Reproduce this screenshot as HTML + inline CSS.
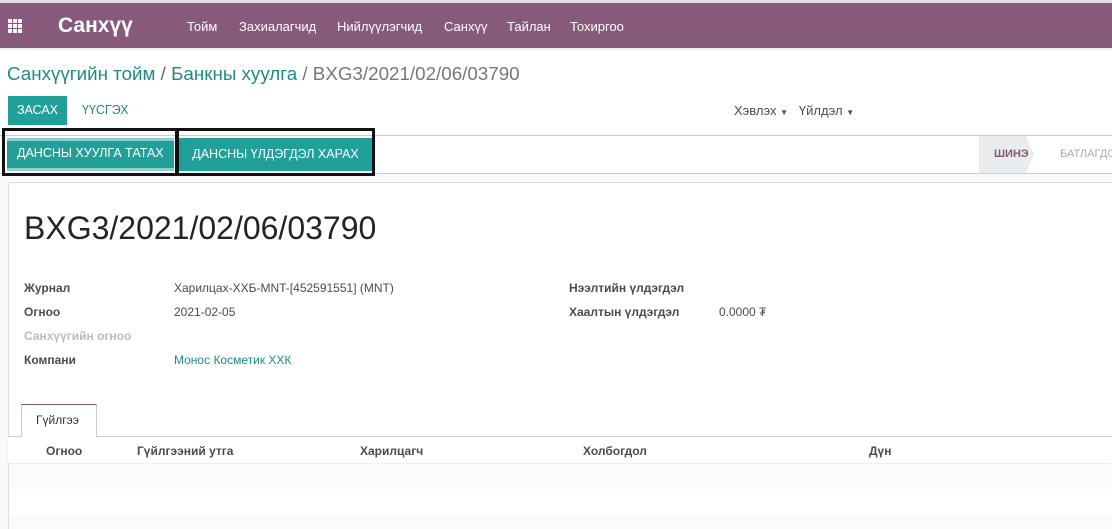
<!DOCTYPE html>
<html><head><meta charset="utf-8"><style>
*{margin:0;padding:0;box-sizing:border-box}
html{width:1112px;height:529px;overflow:hidden}
body{width:1112px;height:529px;overflow:hidden;background:#fff;font-family:"Liberation Sans",sans-serif;position:relative;color:#4c4c4c}
.a{position:absolute;white-space:nowrap}
.nav{left:0;top:3px;width:1112px;height:45px;background:#875a7b}
.nav .m{color:#fff;font-size:13px;top:16px}
.g{width:4px;height:4px;background:#fff;position:absolute}
.btn{background:#21a09a;color:#fff;font-size:12.5px;text-align:center}
.lbl{font-size:12px;font-weight:bold;color:#4c4c4c}
.val{font-size:12px;color:#4c4c4c}
.th{font-size:12px;font-weight:bold;color:#4c4c4c;top:444px}
</style></head><body>
<div class="a" style="left:0;top:0;width:1112px;height:3px;background:#e0e0e0"></div>
<div class="a nav">
<div class="g" style="left:8px;top:16px"></div><div class="g" style="left:13px;top:16px"></div><div class="g" style="left:18px;top:16px"></div>
<div class="g" style="left:8px;top:21px"></div><div class="g" style="left:13px;top:21px"></div><div class="g" style="left:18px;top:21px"></div>
<div class="g" style="left:8px;top:26px"></div><div class="g" style="left:13px;top:26px"></div><div class="g" style="left:18px;top:26px"></div>
<div class="a" style="left:58px;top:11px;color:#fff;font-size:21px;font-weight:bold">Санхүү</div>
<div class="a m" style="left:187px">Тойм</div>
<div class="a m" style="left:239px">Захиалагчид</div>
<div class="a m" style="left:337px">Нийлүүлэгчид</div>
<div class="a m" style="left:444px">Санхүү</div>
<div class="a m" style="left:507px">Тайлан</div>
<div class="a m" style="left:570px">Тохиргоо</div>
</div>
<div class="a" style="left:0;top:48px;width:1112px;height:4px;background:linear-gradient(#eee,#fff)"></div>
<div class="a" style="left:7px;top:63px;font-size:18.8px;color:#1f8a85">Санхүүгийн тойм <span style="color:#666">/</span> Банкны хуулга <span style="color:#777">/ BXG3/2021/02/06/03790</span></div>
<div class="a btn" style="left:8px;top:96px;width:59px;height:29px;line-height:29px">ЗАСАХ</div>
<div class="a" style="left:82px;top:103px;font-size:12.5px;color:#1f8a85">ҮҮСГЭХ</div>
<div class="a" style="left:734px;top:103px;font-size:13px;color:#4c4c4c">Хэвлэх <span style="font-size:8px">▼</span>&nbsp;&nbsp; Үйлдэл <span style="font-size:8px">▼</span></div>
<div class="a" style="left:0;top:135px;width:1112px;height:1px;background:#ccc"></div>
<div class="a" style="left:0;top:173px;width:1112px;height:1px;background:#ccc"></div>
<div class="a" style="left:0;top:174px;width:1112px;height:355px;background:#f9f9f9"></div>
<div class="a" style="left:979px;top:136px;width:55px;height:37px;background:#e9ecef;clip-path:polygon(0 0,85% 0,100% 50%,85% 100%,0 100%)"></div>
<div class="a" style="left:994px;top:148px;font-size:11px;font-weight:bold;color:#875a7b">ШИНЭ</div>
<div class="a" style="left:1060px;top:148px;font-size:11px;color:#aaa">БАТЛАГДС</div>
<div class="a btn" style="left:7px;top:138px;width:167px;height:33px;line-height:29px;border-top:3px solid #8fd0cc;border-bottom:3px solid #8fd0cc"></div>
<div class="a" style="left:17px;top:146px;font-size:12.5px;color:#fff">ДАНСНЫ ХУУЛГА ТАТАХ</div>
<div class="a btn" style="left:179px;top:138px;width:193px;height:33px;line-height:33px">ДАНСНЫ ҮЛДЭГДЭЛ ХАРАХ</div>
<div class="a" style="left:2px;top:128px;width:176px;height:48px;border:3px solid #111"></div>
<div class="a" style="left:176px;top:128px;width:199px;height:48px;border:3px solid #111"></div>
<div class="a" style="left:8px;top:182px;width:1104px;height:347px;background:#fff;border-left:1px solid #ddd;border-top:1px solid #ddd"></div>
<div class="a" style="left:24px;top:210px;font-size:32px;color:#212529">BXG3/2021/02/06/03790</div>
<div class="a lbl" style="left:24px;top:281px">Журнал</div>
<div class="a val" style="left:174px;top:281px">Харилцах-ХХБ-MNT-[452591551] (MNT)</div>
<div class="a lbl" style="left:24px;top:305px">Огноо</div>
<div class="a val" style="left:174px;top:305px">2021-02-05</div>
<div class="a lbl" style="left:24px;top:329px;color:#bbb">Санхүүгийн огноо</div>
<div class="a lbl" style="left:24px;top:353px">Компани</div>
<div class="a val" style="left:174px;top:353px;color:#1f8a85">Монос Косметик ХХК</div>
<div class="a lbl" style="left:569px;top:281px">Нээлтийн үлдэгдэл</div>
<div class="a lbl" style="left:569px;top:305px">Хаалтын үлдэгдэл</div>
<div class="a val" style="left:719px;top:305px">0.0000 ₮</div>
<div class="a" style="left:8px;top:436px;width:1104px;height:1px;background:#ccc"></div>
<div class="a" style="left:21px;top:404px;width:76px;height:33px;background:#fff;border:1px solid #ccc;border-top:1px solid #875a7b;border-bottom:none"></div>
<div class="a val" style="left:36px;top:413px;color:#333">Гүйлгээ</div>
<div class="a" style="left:8px;top:437px;width:1104px;height:26px;background:#fff;box-shadow:0 2px 3px rgba(0,0,0,.08)"></div>
<div class="a th" style="left:46px">Огноо</div>
<div class="a th" style="left:137px">Гүйлгээний утга</div>
<div class="a th" style="left:360px">Харилцагч</div>
<div class="a th" style="left:583px">Холбогдол</div>
<div class="a th" style="left:869px">Дүн</div>
<div class="a" style="left:9px;top:464px;width:1103px;height:25px;background:#fbfbfb"></div>
<div class="a" style="left:9px;top:514px;width:1103px;height:15px;background:#fbfbfb"></div>
</body></html>
